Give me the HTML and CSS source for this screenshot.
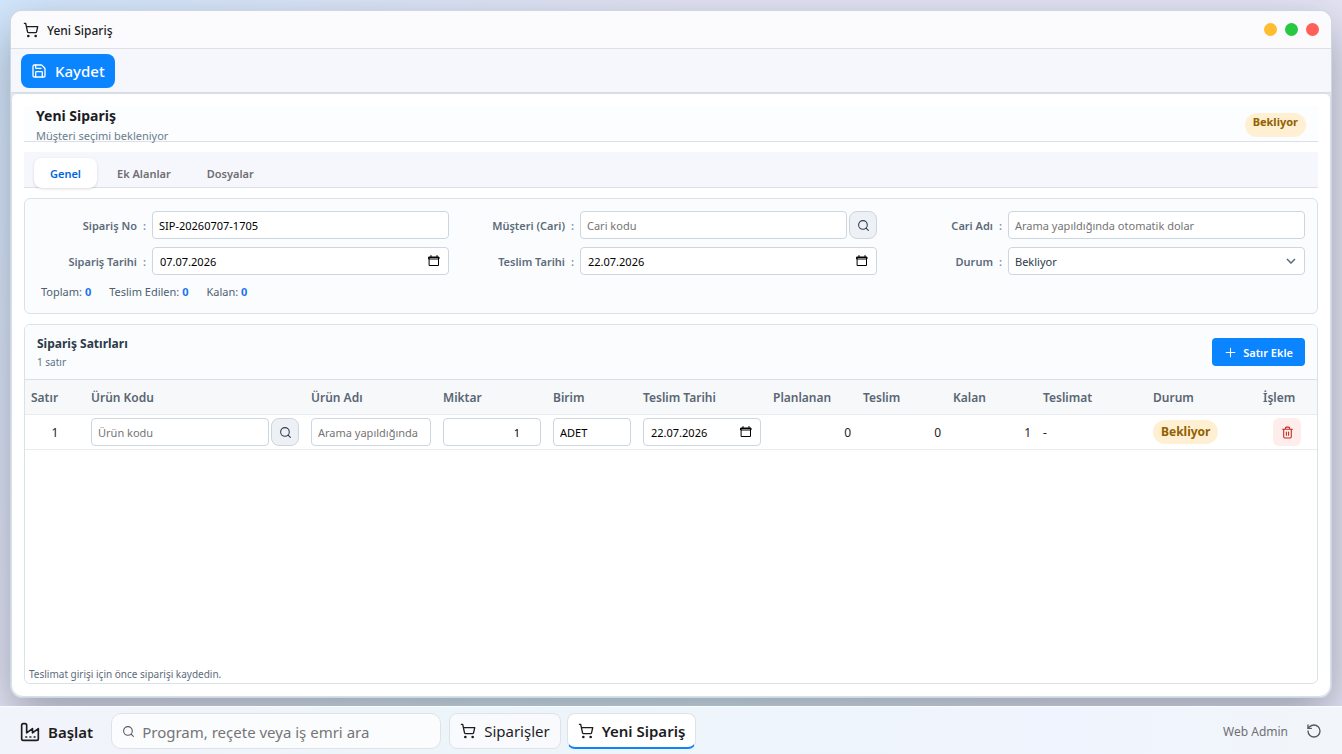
FILE: index.html
```html
<!DOCTYPE html>
<html lang="tr">
<head>
    <meta charset="UTF-8">
    <meta name="viewport" content="width=device-width, initial-scale=1.0">
    <title>Yeni Sipariş</title>
    <link rel="stylesheet" href="styles.css">
</head>
<body>

<!-- Shared icons -->
<svg class="sprite" aria-hidden="true">
    <symbol id="cart" viewBox="0 0 24 24"><circle cx="8" cy="21" r="1"/><circle cx="19" cy="21" r="1"/><path d="M2.05 2.05h2l2.66 12.42a2 2 0 0 0 2 1.58h9.78a2 2 0 0 0 1.95-1.57l1.65-7.43H5.12"/></symbol>
    <symbol id="save" viewBox="0 0 24 24"><path d="M15.2 3a2 2 0 0 1 1.4.6l3.8 3.8a2 2 0 0 1 .6 1.4V19a2 2 0 0 1-2 2H5a2 2 0 0 1-2-2V5a2 2 0 0 1 2-2z"/><path d="M17 21v-7a1 1 0 0 0-1-1H8a1 1 0 0 0-1 1v7M7 3v4a1 1 0 0 0 1 1h7"/></symbol>
    <symbol id="search" viewBox="0 0 24 24"><circle cx="11" cy="11" r="8"/><path d="m21 21-4.3-4.3"/></symbol>
    <symbol id="calendar" viewBox="0 0 12 12"><path d="M1.5 2.5h9v8h-9z"/><path d="M1 2h10v2H1zM3 .5v2M9 .5v2"/></symbol>
    <symbol id="plus" viewBox="0 0 24 24"><path d="M4 12h16M12 4v16"/></symbol>
    <symbol id="trash" viewBox="0 0 24 24"><path d="M3 6h18M19 6v14a2 2 0 0 1-2 2H7a2 2 0 0 1-2-2V6M8 6V4a2 2 0 0 1 2-2h4a2 2 0 0 1 2 2v2M10 11v6M14 11v6"/></symbol>
    <symbol id="factory" viewBox="0 0 24 24"><path d="M2 20a2 2 0 0 0 2 2h16a2 2 0 0 0 2-2V8l-7 5V8l-7 5V4a2 2 0 0 0-2-2H4a2 2 0 0 0-2 2ZM17 18h1M12 18h1M7 18h1"/></symbol>
    <symbol id="reset" viewBox="0 0 24 24"><path d="M3 12a9 9 0 1 0 9-9 9.75 9.75 0 0 0-6.74 2.74L3 8"/><path d="M3 3v5h5"/></symbol>
</svg>

<main class="desktop">
    <section class="window">
        <header class="titlebar">
            <svg class="icon icon-md"><use href="#cart"/></svg>
            <span class="window-title">Yeni Sipariş</span>
            <button class="dot dot-min" aria-label="Küçült"></button>
            <button class="dot dot-max" aria-label="Büyüt"></button>
            <button class="dot dot-close" aria-label="Kapat"></button>
        </header>

        <div class="toolbar">
            <button class="save-btn"><svg class="icon icon-md"><use href="#save"/></svg>Kaydet</button>
        </div>

        <div class="content">
            <div class="page-head">
                <div>
                    <h1>Yeni Sipariş</h1>
                    <p>Müşteri seçimi bekleniyor</p>
                </div>
                <span class="badge">Bekliyor</span>
            </div>

            <nav class="tabs">
                <button class="tab active">Genel</button>
                <button class="tab">Ek Alanlar</button>
                <button class="tab">Dosyalar</button>
            </nav>

            <form class="card order-form">
                <div class="field">
                    <label for="orderNo">Sipariş No</label>
                    <input type="text" id="orderNo" value="SIP-20260707-1705">
                </div>
                <div class="field">
                    <label for="customer">Müşteri (Cari)</label>
                    <div class="lookup">
                        <input type="text" id="customer" placeholder="Cari kodu">
                        <button type="button" class="lookup-btn" aria-label="Cari ara"><svg class="icon icon-sm"><use href="#search"/></svg></button>
                    </div>
                </div>
                <div class="field">
                    <label for="customerName">Cari Adı</label>
                    <input type="text" id="customerName" placeholder="Arama yapıldığında otomatik dolar">
                </div>
                <div class="field">
                    <label for="orderDate">Sipariş Tarihi</label>
                    <div class="date-box">
                        <input type="text" id="orderDate" value="07.07.2026">
                        <button type="button" aria-label="Tarih seç"><svg class="icon icon-cal"><use href="#calendar"/></svg></button>
                    </div>
                </div>
                <div class="field">
                    <label for="dueDate">Teslim Tarihi</label>
                    <div class="date-box">
                        <input type="text" id="dueDate" value="22.07.2026">
                        <button type="button" aria-label="Tarih seç"><svg class="icon icon-cal"><use href="#calendar"/></svg></button>
                    </div>
                </div>
                <div class="field">
                    <label for="status">Durum</label>
                    <select id="status">
                        <option>Bekliyor</option>
                    </select>
                </div>
                <div class="totals">
                    <span>Toplam: <b>0</b></span>
                    <span>Teslim Edilen: <b>0</b></span>
                    <span>Kalan: <b>0</b></span>
                </div>
            </form>

            <section class="card lines">
                <div class="lines-head">
                    <div>
                        <h2>Sipariş Satırları</h2>
                        <small>1 satır</small>
                    </div>
                    <button class="add-btn"><svg class="icon icon-sm"><use href="#plus"/></svg>Satır Ekle</button>
                </div>
                <div class="table-wrap">
                    <table>
                        <colgroup>
                            <col class="w-60"><col class="w-220"><col class="w-132"><col class="w-110">
                            <col class="w-90"><col class="w-130"><col class="w-90"><col class="w-90">
                            <col class="w-90"><col class="w-110"><col class="w-110"><col class="w-60">
                        </colgroup>
                        <thead>
                        <tr>
                            <th>Satır</th>
                            <th>Ürün Kodu</th>
                            <th>Ürün Adı</th>
                            <th>Miktar</th>
                            <th>Birim</th>
                            <th>Teslim Tarihi</th>
                            <th>Planlanan</th>
                            <th>Teslim</th>
                            <th>Kalan</th>
                            <th>Teslimat</th>
                            <th>Durum</th>
                            <th>İşlem</th>
                        </tr>
                        </thead>
                        <tbody>
                        <tr>
                            <td class="center">1</td>
                            <td>
                                <div class="lookup">
                                    <input type="text" placeholder="Ürün kodu" aria-label="Ürün Kodu">
                                    <button class="lookup-btn" aria-label="Ürün ara"><svg class="icon icon-sm"><use href="#search"/></svg></button>
                                </div>
                            </td>
                            <td><input type="text" placeholder="Arama yapıldığında otomatik dolar" aria-label="Ürün Adı"></td>
                            <td><input type="text" class="qty" value="1" aria-label="Miktar"></td>
                            <td><input type="text" value="ADET" aria-label="Birim"></td>
                            <td>
                                <div class="date-box">
                                    <input type="text" value="22.07.2026" aria-label="Teslim Tarihi">
                                    <button aria-label="Tarih seç"><svg class="icon icon-cal"><use href="#calendar"/></svg></button>
                                </div>
                            </td>
                            <td class="num">0</td>
                            <td class="num">0</td>
                            <td class="num">1</td>
                            <td>-</td>
                            <td><span class="badge badge-row">Bekliyor</span></td>
                            <td class="action"><button class="delete-btn" aria-label="Satırı sil"><svg class="icon icon-sm"><use href="#trash"/></svg></button></td>
                        </tr>
                        </tbody>
                    </table>
                </div>
                <p class="hint">Teslimat girişi için önce siparişi kaydedin.</p>
            </section>
        </div>
    </section>
</main>

<footer class="taskbar">
    <button class="start-btn"><svg class="icon icon-lg"><use href="#factory"/></svg>Başlat</button>
    <label class="task-search">
        <svg class="icon icon-sm"><use href="#search"/></svg>
        <input type="text" placeholder="Program, reçete veya iş emri ara" aria-label="Ara">
    </label>
    <button class="task"><svg class="icon icon-md"><use href="#cart"/></svg>Siparişler</button>
    <button class="task current"><svg class="icon icon-md"><use href="#cart"/></svg>Yeni Sipariş</button>
    <span class="user">Web Admin</span>
    <button class="reset-btn" aria-label="Yenile"><svg class="icon icon-md"><use href="#reset"/></svg></button>
</footer>

</body>
</html>
```
FILE: styles.css
```css
* {
    box-sizing: border-box;
}

body {
    display: flex;
    flex-direction: column;
    height: 100vh;
    margin: 0;
    font-family: "Noto Sans", "Open Sans", sans-serif;
    font-size: 12px;
    color: #1d1d1f;
    background:
        radial-gradient(circle at 0 0, #d3e7fd 0%, rgba(211, 231, 253, 0) 45%),
        radial-gradient(circle at 45% 110%, #d2ebf3 0%, rgba(210, 235, 243, 0) 45%),
        #e4e4f5;
}

h1, h2, p {
    margin: 0;
}

button, input, select {
    font: inherit;
    color: inherit;
}

button {
    display: inline-flex;
    align-items: center;
    justify-content: center;
    padding: 0;
    border: none;
    background: none;
    cursor: pointer;
}

.sprite {
    display: none;
}

.icon {
    flex: none;
    fill: none;
    stroke: currentColor;
    stroke-width: 2;
    stroke-linecap: round;
    stroke-linejoin: round;
}

.icon-sm {
    width: 13px;
    height: 13px;
}

.icon-md {
    width: 16px;
    height: 16px;
}

.icon-lg {
    width: 20px;
    height: 20px;
}

.icon-cal {
    width: 12px;
    height: 12px;
    stroke-width: 1;
    stroke-linejoin: miter;
}

/* Window */
.desktop {
    flex: 1;
    display: flex;
    min-height: 0;
    padding: 10px 10px 8px;
    overflow: hidden;
}

.window {
    flex: 1;
    display: flex;
    flex-direction: column;
    min-width: 0;
    border: 1px solid #cbd8e2;
    border-radius: 12px;
    background: #e4e8ee;
    box-shadow: 0 18px 48px rgba(40, 50, 60, 0.4);
    overflow: hidden;
}

.titlebar {
    display: flex;
    align-items: center;
    gap: 8px;
    height: 38px;
    padding: 0 12px;
    background: #fbfbfd;
    border-bottom: 1px solid #dce0e5;
}

.window-title {
    flex: 1;
    padding-top: 2px;
    font-weight: 500;
}

.dot {
    width: 13px;
    height: 13px;
    border-radius: 50%;
}

.dot-min {
    background: #febc2e;
}

.dot-max {
    background: #28c840;
}

.dot-close {
    background: #ff5f57;
}

.toolbar {
    padding: 5px 10px 4px;
    background: #f6f7fc;
    border-bottom: 1px solid #d8dde3;
}

.save-btn {
    gap: 8px;
    height: 34px;
    padding: 0 10px;
    border-radius: 8px;
    background: #0a84ff;
    color: #fff;
    font-size: 15px;
    font-weight: 500;
}

.content {
    flex: 1;
    display: flex;
    flex-direction: column;
    gap: 10px;
    min-height: 0;
    padding: 12px;
    border: 1px solid #d5e0e8;
    border-radius: 6px 6px 12px 12px;
    background: #fff;
}

.page-head {
    display: flex;
    justify-content: space-between;
    height: 36px;
    padding: 0 12px;
    border-bottom: 1px solid #dce0e6;
    background: #fbfdff;
}

h1 {
    font-size: 14px;
    line-height: 20px;
    font-weight: 700;
}

.page-head p {
    font-size: 11px;
    line-height: 20px;
    color: #6b7c8b;
}

.badge {
    height: 24px;
    margin-top: 7px;
    padding: 0 8px;
    border-radius: 12px;
    background: #fff0d4;
    color: #916000;
    font-size: 11px;
    font-weight: 700;
    line-height: 18px;
}

.tabs {
    display: flex;
    gap: 4px;
    height: 36px;
    padding: 6px 10px 0;
    border-bottom: 1px solid #dce0e6;
    background: #f6f7fc;
}

.tab {
    height: 30px;
    padding: 0 16px;
    border-radius: 8px;
    color: #6e6e73;
    font-size: 11px;
    font-weight: 600;
}

.tab.active {
    background: #fff;
    color: #0066e0;
    box-shadow: 0 1px 3px rgba(0, 0, 0, 0.14);
}

/* Order form */
.card {
    border: 1px solid #dae2e9;
    border-radius: 6px;
}

.order-form {
    display: grid;
    grid-template-columns: repeat(3, 1fr);
    gap: 8px 16px;
    padding: 12px;
    background: #fbfcfe;
}

.field {
    display: grid;
    grid-template-columns: 109px minmax(0, 1fr);
    column-gap: 6px;
    align-items: center;
}

.field label {
    color: #5b6b7a;
    font-size: 11px;
    font-weight: 600;
    text-align: right;
}

.field label::after {
    content: ":";
    margin-left: 6px;
    color: #8592a0;
}

.order-form input, .order-form select, td input {
    display: block;
    width: 100%;
    min-width: 0;
    height: 28px;
    padding: 0 9px 0 6px;
    border: 1px solid #ccd6e0;
    border-radius: 4px;
    background: #fff;
    color: #000;
    font-size: 11px;
}

input::placeholder {
    color: #757575;
}

.order-form select {
    appearance: none;
    color: #2c3b49;
    background: #fff url("data:image/svg+xml,%3Csvg xmlns='http://www.w3.org/2000/svg' width='10' height='6'%3E%3Cpath d='M1 1l4 4 4-4' fill='none' stroke='%235b6b7a' stroke-width='1.5'/%3E%3C/svg%3E") no-repeat right 8px center;
}

.lookup {
    display: flex;
    gap: 2px;
}

.lookup-btn {
    flex: none;
    width: 28px;
    height: 28px;
    border: 1px solid #cbd5df;
    border-radius: 8px;
    background: #edf1f5;
    color: #2c3e50;
}

.date-box {
    position: relative;
}

.order-form .date-box input, td .date-box input {
    padding-left: 7px;
}

.date-box button {
    position: absolute;
    top: 8px;
    right: 9px;
    color: #000;
}

.totals {
    grid-column: 1 / -1;
    display: flex;
    gap: 18px;
    height: 18px;
    padding: 0 4px;
    line-height: 18px;
    font-size: 11px;
    color: #4e5f70;
}

.totals b {
    color: #1a73f0;
}

/* Order lines */
.lines {
    flex: 1;
    display: flex;
    flex-direction: column;
    min-height: 0;
    overflow: hidden;
}

.lines-head {
    display: flex;
    align-items: center;
    justify-content: space-between;
    height: 55px;
    padding: 0 12px;
    border-bottom: 1px solid #dae0e7;
    background: #fbfcfe;
}

h2 {
    font-size: 12px;
    line-height: 20px;
    font-weight: 700;
    color: #2c3b49;
}

small {
    display: block;
    font-size: 10px;
    line-height: 16px;
    color: #5b7288;
}

.add-btn {
    gap: 6px;
    height: 28px;
    padding: 0 12px;
    border-radius: 4px;
    background: #0a84ff;
    color: #fff;
    font-size: 11px;
    font-weight: 600;
}

.table-wrap {
    flex: 1;
    overflow: auto;
}

table {
    width: 100%;
    table-layout: fixed;
    border-collapse: separate;
    border-spacing: 0;
}

.w-60 { width: 60px; }
.w-90 { width: 90px; }
.w-110 { width: 110px; }
.w-130 { width: 130px; }
.w-132 { width: 132px; }
.w-220 { width: 220px; }

th, td {
    height: 35px;
    padding: 0 6px;
    border-bottom: 1px solid #e8ecf1;
    text-align: left;
    white-space: nowrap;
}

th {
    background: #f6f8fa;
    color: #5a6672;
    font-weight: 600;
}

.center {
    text-align: center;
}

.num {
    text-align: right;
}

td input.qty {
    padding-right: 20px;
    text-align: right;
}

.badge-row {
    display: inline-block;
    margin-top: 0;
    font-size: 12px;
    line-height: 24px;
}

.action {
    padding-left: 16px;
}

.delete-btn {
    width: 28px;
    height: 28px;
    border-radius: 6px;
    background: #ffedec;
    color: #c22b21;
}

.hint {
    padding: 0 4px;
    font-size: 10px;
    line-height: 18px;
    color: #5b6b7a;
}

/* Taskbar */
.taskbar {
    display: flex;
    align-items: center;
    height: 48px;
    padding: 1px 20px 0;
    border-top: 1px solid #fafcff;
    background: linear-gradient(90deg, #f2f4fb 0%, #ecf5f9 35%, #f0f4fe 80%, #f2f6fa 100%);
    font-size: 15px;
}

.start-btn {
    gap: 8px;
    padding-top: 1px;
    font-weight: 600;
}

.task-search {
    display: flex;
    align-items: center;
    gap: 7px;
    width: 330px;
    height: 36px;
    margin-left: 18px;
    padding: 0 10px;
    border: 1px solid #dfe3e9;
    border-radius: 10px;
    background: #fbfcfe;
    color: #55585e;
}

.task-search input {
    flex: 1;
    min-width: 0;
    padding: 2px 0 0;
    border: none;
    background: none;
    outline: none;
}

.task {
    gap: 8px;
    height: 36px;
    margin-left: 8px;
    padding: 0 10px;
    border: 1px solid #dfe3e9;
    border-radius: 8px;
    background: #f8fafd;
}

.task.current {
    margin-left: 6px;
    border-bottom: 2px solid #0a84ff;
    background: #fff;
    font-weight: 600;
}

.user {
    margin-left: auto;
    padding-top: 1px;
    color: #6e6e73;
    font-size: 12px;
}

.reset-btn {
    margin-left: 18px;
    color: #55585e;
}
```
